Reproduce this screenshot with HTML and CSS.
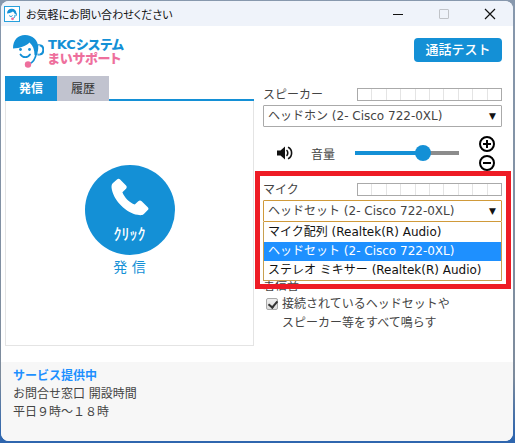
FILE: index.html
```html
<!DOCTYPE html>
<html lang="ja">
<head>
  <meta charset="UTF-8">
  <title>お気軽にお問い合わせください</title>
  <link rel="stylesheet" href="styles.css">
</head>
<body>

  <div class="window">
    <div class="titlebar">
      <svg class="app-icon" viewBox="0 0 16 16">
        <rect x="0.5" y="0.5" width="15" height="15" fill="#fff" stroke="#27a0dc"/>
        <path d="M3 7.5C3 4.500 5 2.800 7.700 2.800C10.500 2.800 12.400 4.800 12.400 7.200L11 8.500C10.600 7 10 6.200 8.800 5.500C7.500 6.700 5.500 7 3 7.500Z" fill="#1490d6"/>
        <path d="M12.300 7.200v2.500M11 9c0 2-.7 3-2.300 3.500M5.200 9.500c.8 1.300 2.500 1.300 3.300 0" fill="none" stroke="#1490d6"/>
        <circle cx="8.500" cy="12.800" r="1.400" fill="#ee6f9d"/>
      </svg>
      <span class="titlebar-text">お気軽にお問い合わせください</span>
      <div class="window-buttons">
        <button type="button" aria-label="最小化"><svg viewBox="0 0 12 12"><path d="M1 6.500h10" stroke="#111"/></svg></button>
        <button type="button" aria-label="最大化" disabled><svg viewBox="0 0 12 12"><rect x="1.500" y="1.500" width="9" height="9" rx="0.500" fill="none" stroke="#c0c3c8"/></svg></button>
        <button type="button" aria-label="閉じる"><svg viewBox="0 0 12 12"><path d="M1 1l10 10M11 1L1 11" stroke="#111" stroke-width="1.200"/></svg></button>
      </div>
    </div>

    <header class="header">
      <div class="logo">
        <svg class="logo-mark" viewBox="0 0 32 34">
          <path d="M1 14.500C1 6 6 1 13 1C20.500 1 26 6 26.500 14L25 21H22.500C22.500 15.500 21 11.500 17.500 8.500C13.500 12.500 8 14 1 14.500Z" fill="#1490d6"/>
          <path d="M25.500 11.200h1.500c3 0 4.300 1.800 4.300 4.600s-1.300 4.600-4.300 4.600h-1.500" fill="none" stroke="#1490d6" stroke-width="2"/>
          <path d="M27 11v9.500" stroke="#fff"/>
          <path d="M24.300 19c-.8 6-3.300 9.800-7.800 11.400" fill="none" stroke="#1490d6" stroke-width="1.800"/>
          <path d="M8.500 20.500c2.200 3.600 7.300 3.600 9.500 0" fill="none" stroke="#1490d6" stroke-width="1.800" stroke-linecap="round"/>
          <circle cx="8.500" cy="15.500" r="1.400" fill="#1490d6"/>
          <circle cx="17.500" cy="15.500" r="1.400" fill="#1490d6"/>
          <circle cx="16" cy="30.500" r="3.200" fill="#ee6f9d"/>
        </svg>
        <div class="logo-text">
          <div class="logo-top">TKCシステム</div>
          <div class="logo-bottom">まいサポート</div>
        </div>
      </div>
      <button type="button" class="test-btn">通話テスト</button>
    </header>

    <main class="main">
      <section class="left">
        <div class="tabs" role="tablist">
          <button type="button" class="tab active" role="tab" aria-selected="true">発信</button>
          <button type="button" class="tab" role="tab" aria-selected="false">履歴</button>
        </div>
        <div class="call-panel">
          <button type="button" class="call-btn">
            <svg viewBox="0 0 40 40">
              <path d="M6.300 1.500L1.800 5.600C0.300 7 0.300 9.500 1 12.500C3.500 24 16 36.500 28 38.800C31 39.400 33.300 39.200 34.600 37.900L38.700 33.700C39.700 32.700 39.700 31.700 38.700 30.700L32.300 24.400C31.200 23.300 29.800 23.300 28.700 24.400L25 28C19.500 26 14 20.500 12 15L15.800 11.200C16.800 10.200 16.800 8.900 15.800 7.900L9.600 1.500C8.500 0.400 7.400 0.400 6.300 1.500Z" fill="#fff"/>
            </svg>
            <span>ｸﾘｯｸ</span>
          </button>
          <div class="call-label">発 信</div>
        </div>
      </section>

      <section class="right">
        <div class="device">
          <div class="device-head">
            <label for="speaker">スピーカー</label>
            <div class="level"><i></i><i></i><i></i><i></i><i></i><i></i><i></i><i></i><i></i><i></i></div>
          </div>
          <div class="select-box">
            <select id="speaker">
              <option>ヘッドホン (2- Cisco 722-0XL)</option>
            </select>
          </div>
        </div>

        <div class="volume">
          <svg class="volume-icon" viewBox="0 0 18 14">
            <path d="M1 4.500h3.500L9 0.500v13L4.500 9.500H1z" fill="#111"/>
            <path d="M10.500 4.200c1.700 1.200 1.700 4.400 0 5.600M12 1.300c4.800 2 4.800 9.400 0 11.400" fill="none" stroke="#111" stroke-width="1.600"/>
          </svg>
          <label for="volume">音量</label>
          <input type="range" id="volume" min="0" max="100" value="68">
          <div class="volume-buttons">
            <button type="button" aria-label="音量を上げる"><svg viewBox="0 0 16 16"><circle cx="8" cy="8" r="7" fill="none" stroke="#000" stroke-width="2"/><path d="M4 8h8M8 4v8" stroke="#000" stroke-width="2"/></svg></button>
            <button type="button" aria-label="音量を下げる"><svg viewBox="0 0 16 16"><circle cx="8" cy="8" r="7" fill="none" stroke="#000" stroke-width="2"/><path d="M4 8h8" stroke="#000" stroke-width="2"/></svg></button>
          </div>
        </div>

        <div class="device marked">
          <div class="device-head">
            <label for="mic">マイク</label>
            <div class="level"><i></i><i></i><i></i><i></i><i></i><i></i><i></i><i></i><i></i><i></i></div>
          </div>
          <div class="select-box open">
            <select id="mic">
              <option>マイク配列 (Realtek(R) Audio)</option>
              <option selected>ヘッドセット (2- Cisco 722-0XL)</option>
              <option>ステレオ ミキサー (Realtek(R) Audio)</option>
            </select>
            <ul class="options" role="listbox">
              <li role="option">マイク配列 (Realtek(R) Audio)</li>
              <li role="option" class="selected" aria-selected="true">ヘッドセット (2- Cisco 722-0XL)</li>
              <li role="option">ステレオ ミキサー (Realtek(R) Audio)</li>
            </ul>
          </div>
        </div>

        <div class="ringtone">
          <div class="ringtone-title">着信音</div>
          <label class="ringtone-check">
            <input type="checkbox" checked>
            <span>接続されているヘッドセットや<br>スピーカー等をすべて鳴らす</span>
          </label>
        </div>
      </section>
    </main>

    <footer class="footer">
      <div class="status">サービス提供中</div>
      <div>お問合せ窓口 開設時間</div>
      <div>平日９時～１８時</div>
    </footer>
  </div>

</body>
</html>
```

FILE: styles.css
```css
* {
  box-sizing: border-box;
}

body {
  margin: 0;
  padding: 1px 2px 2px 1px;
  min-height: 100vh;
  display: flex;
  background: linear-gradient(to bottom, #8798ad 0%, #7d8b9c 85%, #2f66ae 98%);
  font-family: "DejaVu Sans", "Noto Sans CJK JP", sans-serif;
  font-size: 12px;
  color: #444;
}

button, select, input {
  font-family: inherit;
  font-size: inherit;
  margin: 0;
}

button {
  border: none;
  padding: 0;
  background: none;
  cursor: pointer;
}

svg {
  display: block;
}

.window {
  flex: 1;
  display: flex;
  flex-direction: column;
  background: #fff;
  border-radius: 8px;
  overflow: hidden;
}

/* title bar */
.titlebar {
  display: flex;
  align-items: center;
  height: 25px;
  padding-left: 3px;
  background: #eff3fa;
}

.app-icon {
  width: 16px;
  height: 16px;
  margin-right: 6px;
}

.titlebar-text {
  flex: 1;
  color: #111;
  font-size: 11px;
  font-feature-settings: "palt";
}

.window-buttons {
  display: flex;
}

.window-buttons button {
  width: 46px;
  height: 25px;
  display: flex;
  align-items: center;
  justify-content: center;
}

.window-buttons svg {
  width: 12px;
  height: 12px;
}

/* header */
.header {
  display: flex;
  justify-content: space-between;
  align-items: flex-start;
  height: 50px;
  padding: 8px 11px 0 11px;
}

.logo {
  display: flex;
  gap: 4px;
}

.logo-mark {
  width: 32px;
  height: 34px;
}

.logo-text {
  padding-top: 4px;
  font-size: 13px;
  font-weight: 900;
  line-height: 14px;
  font-feature-settings: "palt";
}

.logo-top {
  color: #1490d6;
}

.logo-bottom {
  color: #ee6f9d;
}

.test-btn {
  width: 88px;
  height: 24px;
  margin-top: 4px;
  border-radius: 4px;
  background: #1490d6;
  color: #fff;
  font-size: 13px;
  font-weight: 500;
  line-height: 22px;
}

/* main area */
.main {
  flex: 1;
  display: grid;
  grid-template-columns: 1fr 239px;
  gap: 9px;
  padding: 0 11px 16px 4px;
}

.left {
  display: flex;
  flex-direction: column;
}

.tabs {
  display: flex;
  box-shadow: inset 0 -2px #1490d6;
}

.tab {
  width: 52px;
  height: 25px;
  padding-bottom: 2px;
  background: #c1c3cf;
  color: #333;
}

.tab.active {
  background: #1490d6;
  color: #fff;
  font-weight: bold;
}

.call-panel {
  flex: 1;
  display: flex;
  flex-direction: column;
  align-items: center;
  padding-top: 64px;
  border: 1px solid #e4e4e4;
  border-top: none;
}

.call-btn {
  display: flex;
  flex-direction: column;
  align-items: center;
  width: 90px;
  height: 90px;
  padding-top: 13px;
  border-radius: 50%;
  background: #1490d6;
  color: #fff;
  font-size: 16px;
  font-weight: 500;
  line-height: 20px;
}

.call-btn svg {
  width: 38px;
  height: 38px;
  margin-bottom: 9px;
}

.call-label {
  color: #1490d6;
  font-size: 14px;
  line-height: 24px;
}

/* devices */
.right {
  padding-top: 12px;
}

.device-head {
  display: flex;
  justify-content: space-between;
  height: 13px;
  margin-bottom: 4px;
  line-height: 15px;
}

.level {
  display: flex;
  width: 145px;
  border: 1px solid #aaa;
}

.level i {
  flex: 1;
}

.level i + i {
  border-left: 1px solid #e4e4e4;
}

.select-box {
  position: relative;
}

.select-box::after {
  content: "▼";
  position: absolute;
  top: 0;
  right: 6px;
  color: #111;
  font-size: 9px;
  line-height: 22px;
  pointer-events: none;
}

.select-box select {
  display: block;
  width: 100%;
  height: 22px;
  padding: 0 4px;
  border: 1px solid #aaa;
  border-radius: 1px;
  background: #fff;
  color: #444;
  appearance: none;
}

.select-box.open select {
  border-color: #d09a3a;
}

.options {
  position: absolute;
  top: 22px;
  left: 0;
  right: 0;
  z-index: 1;
  margin: 0;
  padding: 1px 0 0;
  border: 1px solid #c8a050;
  border-top: none;
  background: #fff;
  color: #111;
  list-style: none;
}

.options li {
  height: 19px;
  padding: 0 4px;
  line-height: 19px;
  white-space: nowrap;
}

.options li.selected {
  background: #1e90ff;
  color: #fff;
}

/* volume */
.volume {
  display: flex;
  align-items: center;
  height: 56px;
  padding: 0 7px 4px 13px;
}

.volume-icon {
  width: 18px;
  height: 14px;
  margin-right: 17px;
}

.volume input {
  flex: 1;
  min-width: 0;
  height: 16px;
  margin: 0 20px;
  appearance: none;
  background: linear-gradient(to right, #1490d6 66%, #8c8c8c 66%) center / 100% 4px no-repeat;
}

.volume input::-webkit-slider-thumb {
  appearance: none;
  width: 16px;
  height: 16px;
  border-radius: 50%;
  background: #1490d6;
}

.volume-buttons {
  display: flex;
  flex-direction: column;
  gap: 3px;
}

.volume-buttons svg {
  width: 16px;
  height: 16px;
}

/* red frame round the microphone block */
.marked {
  position: relative;
}

.marked::after {
  content: "";
  position: absolute;
  inset: -12px -9px -67px -8px;
  z-index: 2;
  border: 5px solid #ee1c25;
  pointer-events: none;
}

.ringtone {
  padding-top: 56px;
}

.ringtone-title {
  line-height: 17px;
}

.ringtone-check {
  display: flex;
  gap: 4px;
  padding-left: 3px;
  line-height: 19px;
}

.ringtone-check input {
  appearance: none;
  flex: none;
  width: 12px;
  height: 12px;
  margin: 3px 0 0;
  border: 1px solid #aaa;
  border-radius: 2px;
  background: linear-gradient(#eee, #ddd);
}

.ringtone-check input:checked::before {
  content: "";
  display: block;
  width: 4px;
  height: 7px;
  margin: 0 0 0 3px;
  border: solid #333;
  border-width: 0 2px 2px 0;
  transform: rotate(40deg);
}

/* footer */
.footer {
  height: 79px;
  padding: 5px 12px;
  background: #f7f7f7;
  line-height: 18px;
}

.status {
  color: #1e90ff;
  font-weight: bold;
}
```
